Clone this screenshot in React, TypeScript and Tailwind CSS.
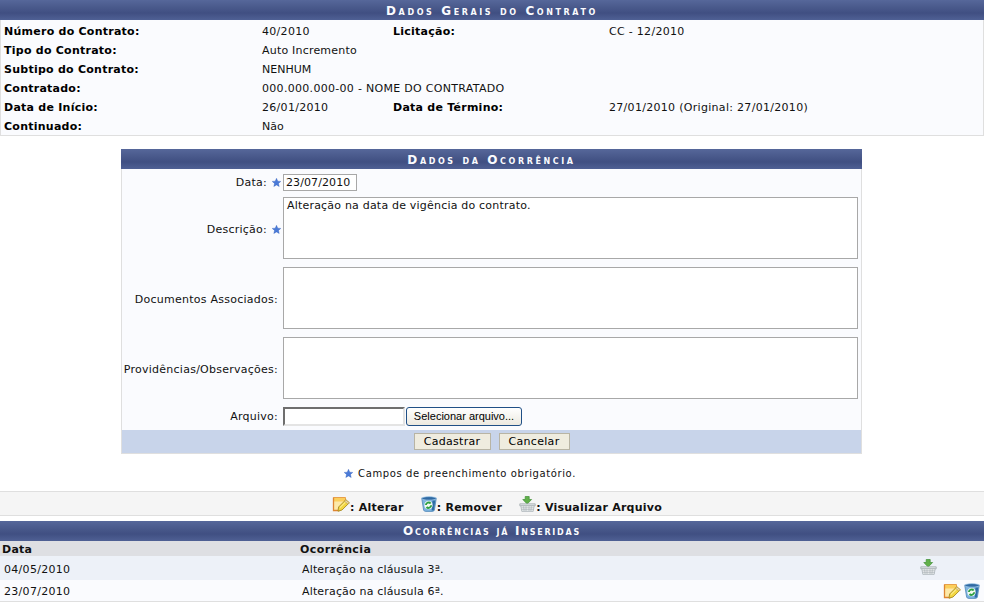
import React from "react";

const font = "font-['DejaVu_Sans',Verdana,sans-serif]";

function Star() {
  return (
    <svg width="9" height="9" viewBox="0 0 10 10" className="inline-block shrink-0">
      <path d="M5 0.3 L6.4 3.5 L9.8 3.8 L7.2 6 L8 9.5 L5 7.7 L2 9.5 L2.8 6 L0.2 3.8 L3.6 3.5 Z" fill="#4a7ad8" stroke="#2f5db8" strokeWidth="0.4" />
    </svg>
  );
}

function NoteIcon() {
  return (
    <svg width="18" height="16" viewBox="0 0 18 16" className="shrink-0">
      <path d="M1.5 1.5 H13.5 V8 L8 14.5 H1.5 Z" fill="#fde9a8" stroke="#e8a04a" strokeWidth="1" />
      <path d="M2 2 H13 V5.5 H2 Z" fill="#fbcf5c" />
      <path d="M1.5 1.5 V14.5 H7.5" fill="none" stroke="#dd8532" strokeWidth="1.3" />
      <path d="M6.6 11 L13.8 3.8 L17.3 6.8 L10 14 L6 15.2 Z" fill="#f2d642" stroke="#a88a20" strokeWidth="0.9" />
      <path d="M8 11.5 L14.6 5" stroke="#fff6b0" strokeWidth="1" />
      <path d="M13.8 3.8 L17.3 6.8 L16 8.2 L12.5 5.2 Z" fill="#e9d6ae" stroke="#a88a20" strokeWidth="0.5" />
    </svg>
  );
}

function BinIcon() {
  return (
    <svg width="16" height="16" viewBox="0 0 16 16" className="shrink-0">
      <path d="M0.7 2 H15.3 L13.4 14 Q13.2 15.4 11 15.4 H5 Q2.8 15.4 2.6 14 Z" fill="#7db4e0" stroke="#4f86b8" strokeWidth="0.8" />
      <ellipse cx="8" cy="2.4" rx="7.3" ry="1.8" fill="#2f6aa3" stroke="#b5d6f0" strokeWidth="0.7" />
      <path d="M11.5 4.5 H14.3 L12.8 14.6 H10.6 Z" fill="#2d6ea6" />
      <circle cx="7.5" cy="9.2" r="4.1" fill="#f4faf2" />
      <path d="M4.9 9 A2.7 2.7 0 0 1 9.7 7.5 M10.2 9.3 A2.7 2.7 0 0 1 5.5 11" fill="none" stroke="#2ea043" strokeWidth="1.9" />
    </svg>
  );
}

function BasketIcon() {
  return (
    <svg width="17" height="16" viewBox="0 0 17 16" className="shrink-0">
      <path d="M6.2 0.5 H10.2 V3.5 H12.6 L8.2 8 L3.8 3.5 H6.2 Z" fill="#62b04a" stroke="#3f8f35" strokeWidth="0.7" />
      <path d="M0.8 7.8 H16.2 V9.8 H0.8 Z" fill="#dfe3e6" stroke="#9aa3a8" strokeWidth="0.7" />
      <path d="M1.8 9.8 H15.2 L14.2 15.4 H2.8 Z" fill="#eef0f2" stroke="#a4acb0" strokeWidth="0.7" />
      <path d="M4.6 10.3 L5.1 15 M7 10.3 V15 M10 10.3 V15 M12.4 10.3 L11.9 15 M2.3 11.8 H14.8 M2.6 13.6 H14.4" stroke="#a4acb0" strokeWidth="0.6" />
    </svg>
  );
}

function Title({ children, track = "tracking-[2.6px] pt-[1px]" }: { children: React.ReactNode; track?: string }) {
  return (
    <div
      className={`h-5 flex items-center justify-center bg-[linear-gradient(#56679a_0%,#4a5a8c_35%,#404f82_65%,#4f6094_100%)] text-[12px] font-bold text-[#fafbfe] ${track} [font-variant:small-caps] leading-none`}
    >
      {children}
    </div>
  );
}

const L = "font-bold text-black tracking-[0.25px]";
const N = "tracking-[0.3px]";

function Info({ label, value, label2, value2, vt = N }: { label: string; value: string; label2?: string; value2?: string; vt?: string }) {
  return (
    <div className="flex h-[19px] items-center pt-[4px]">
      <div className={`w-[261px] pl-[3px] ${L}`}>{label}</div>
      <div className={`w-[131px] whitespace-nowrap ${vt}`}>{value}</div>
      <div className={`w-[216px] ${L}`}>{label2}</div>
      <div className={N}>{value2}</div>
    </div>
  );
}

function Area({ value = "" }: { value?: string }) {
  return (
    <textarea
      readOnly
      value={value}
      className="block h-[62px] w-[575px] resize-none border border-[#a8a8a8] bg-white px-[3px] py-[1px] text-[11px] tracking-[0.2px] leading-[14px] outline-none"
    />
  );
}

function FormRow({ label, star, children, className = "", lift = "pt-[2px]" }: { label: string; star?: boolean; children: React.ReactNode; className?: string; lift?: string }) {
  return (
    <div className={`flex items-center ${className}`}>
      <div className={`flex w-[161px] items-center justify-end gap-[5px] ${star ? "pr-[2px]" : "pr-[5px]"} ${lift} leading-none tracking-[0.25px]`}>
        <span className="whitespace-nowrap">{label}</span>
        {star && <Star />}
      </div>
      {children}
    </div>
  );
}

function Btn({ children, w }: { children: React.ReactNode; w: string }) {
  return (
    <button className={`h-[17px] ${w} border border-[#b8b4a4] bg-[#efecdf] text-[11px] tracking-[0.3px] leading-none text-black`}>
      {children}
    </button>
  );
}

export default function App() {
  return (
    <div className={`${font} w-[984px] h-[604px] overflow-hidden bg-white text-[11px] text-[#111]`}>
      <Title>Dados Gerais do Contrato</Title>
      <div className="h-[116px] border-x border-b border-[#dfdfdf] bg-[#fafbfe] pt-[1px]">
        <Info label="Número do Contrato:" value="40/2010" label2="Licitação:" value2="CC - 12/2010" />
        <Info label="Tipo do Contrato:" value="Auto Incremento" vt="tracking-[0.2px]" />
        <Info label="Subtipo do Contrato:" value="NENHUM" vt="tracking-[0px]" />
        <Info label="Contratado:" value="000.000.000-00 - NOME DO CONTRATADO" />
        <Info label="Data de Início:" value="26/01/2010" label2="Data de Término:" value2="27/01/2010 (Original: 27/01/2010)" />
        <Info label="Continuado:" value="Não" vt="tracking-[0px]" />
      </div>

      <div className="mx-[121px] mt-[13px] w-[741px]">
        <Title>Dados da Ocorrência</Title>
        <div className="border-x border-[#dfdfdf] bg-[#fafbfe]">
          <FormRow label="Data:" star className="h-[25px] pt-[1px]" lift="">
            <input readOnly value="23/07/2010" className="h-[17px] w-[74px] border border-[#a8a8a8] bg-white px-[2px] text-[11px] tracking-[0.1px] outline-none" />
          </FormRow>
          <FormRow label="Descrição:" star className="mt-[3px]">
            <Area value="Alteração na data de vigência do contrato." />
          </FormRow>
          <FormRow label="Documentos Associados:" className="mt-[8px]">
            <Area />
          </FormRow>
          <FormRow label="Providências/Observações:" className="mt-[8px]">
            <Area />
          </FormRow>
          <FormRow label="Arquivo:" className="mt-[7px] h-[20px]" lift="">
            <input readOnly className="h-[19px] w-[122px] border-2 border-[#6e6e6e] border-r-[#e4e4e4] border-b-[#e4e4e4] bg-white outline-none" />
            <button className="ml-[1px] h-[19px] w-[116px] rounded-[3px] border border-[#1f4f86] bg-[linear-gradient(#ffffff,#ece9e0)] font-['Liberation_Sans',Arial,sans-serif] text-[11px] leading-none text-black">
              Selecionar arquivo...
            </button>
          </FormRow>
          <div className="mt-[4px] flex h-[24px] items-center justify-center gap-[8px] border-b border-[#dfdfdf] bg-[#c8d4ea]">
            <Btn w="w-[77px]">Cadastrar</Btn>
            <Btn w="w-[71px]">Cancelar</Btn>
          </div>
        </div>
      </div>

      <div className="mt-[12px] flex h-[15px] items-center justify-center gap-[5px] pr-[64px] tracking-[0.6px]">
        <Star />
        <span className="text-[10px]">Campos de preenchimento obrigatório.</span>
      </div>

      <div className="mt-[10px] flex h-[25px] items-start justify-center gap-[17px] border-y border-[#dfdfdf] bg-[#f5f5f5] pl-[10px] pt-[4px] font-bold tracking-[0.25px]">
        <span className="flex items-start"><NoteIcon /><span className="pt-[4px]">: Alterar</span></span>
        <span className="flex items-start"><BinIcon /><span className="pt-[4px]">: Remover</span></span>
        <span className="flex items-start"><BasketIcon /><span className="pt-[4px]">: Visualizar Arquivo</span></span>
      </div>

      <div className="mt-[5px]">
        <Title track="tracking-[1.75px]">Ocorrências já Inseridas</Title>
        <div className="flex h-[15px] items-center bg-[#dedfe3] pt-[4px] font-bold">
          <div className="w-[300px] pl-[2px] tracking-[0.25px]">Data</div>
          <div className="tracking-[0.4px]">Ocorrência</div>
        </div>
        <div className="flex h-[24px] items-center bg-[#edf1f8]">
          <div className={`w-[302px] pl-[4px] pt-[4px] ${N}`}>04/05/2010</div>
          <div className="flex-1 pt-[4px] tracking-[0.16px]">Alteração na cláusula 3ª.</div>
          <div className="mb-[2px] mr-[47px] flex"><BasketIcon /></div>
        </div>
        <div className="flex h-[22px] items-center border-b border-[#dfdfdf] bg-[#fafbfe]">
          <div className={`w-[302px] pl-[4px] pt-[4px] ${N}`}>23/07/2010</div>
          <div className="flex-1 pt-[4px] tracking-[0.16px]">Alteração na cláusula 6ª.</div>
          <div className="mr-[4px] flex gap-[3px]"><NoteIcon /><BinIcon /></div>
        </div>
      </div>
    </div>
  );
}
